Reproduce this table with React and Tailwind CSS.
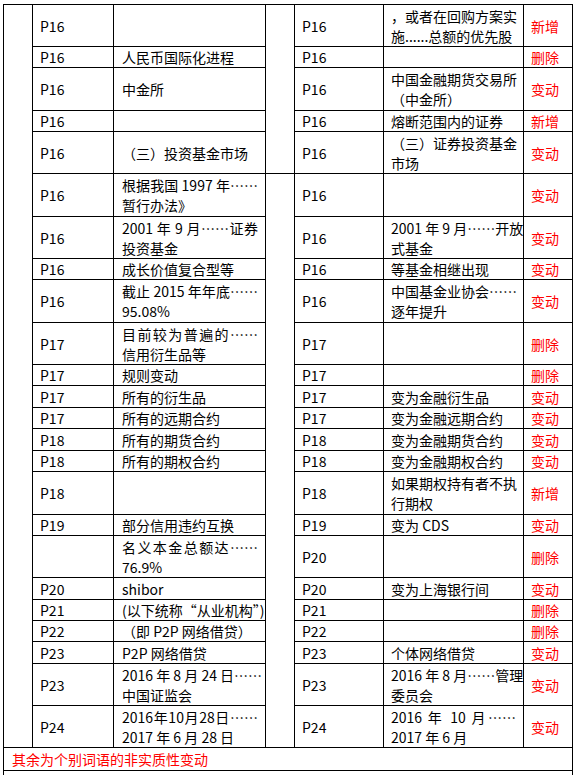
import React from "react";

const rows = [
  { h: "h-[42px]", lp: "P16", lt: [], rp: "P16", rt: ["，或者在回购方案实", "施......总额的优先股"], s: "新增" },
  { h: "h-[21px]", lp: "P16", lt: ["人民币国际化进程"], rp: "P16", rt: [], s: "删除" },
  { h: "h-[43px]", lp: "P16", lt: ["中金所"], rp: "P16", rt: ["中国金融期货交易所", "（中金所）"], s: "变动" },
  { h: "h-[21px]", lp: "P16", lt: [], rp: "P16", rt: ["熔断范围内的证券"], s: "新增" },
  { h: "h-[42px]", lp: "P16", lt: ["（三）投资基金市场"], rp: "P16", rt: ["（三）证券投资基金", "市场"], s: "变动", gap: true },
  { h: "h-[43px]", lp: "P16", lt: ["根据我国 1997 年……", "暂行办法》"], rp: "P16", rt: [], s: "变动" },
  { h: "h-[42px]", lp: "P16", lt: ["2001 年 9 月……证券", "投资基金"], rp: "P16", rt: ["2001 年 9 月……开放", "式基金"], s: "变动" },
  { h: "h-[21px]", lp: "P16", lt: ["成长价值复合型等"], rp: "P16", rt: ["等基金相继出现"], s: "变动" },
  { h: "h-[43px]", lp: "P16", lt: ["截止 2015 年年底……", "95.08%"], rp: "P16", rt: ["中国基金业协会……", "逐年提升"], s: "变动" },
  { h: "h-[42px]", lp: "P17", lt: ["目前较为普遍的……", "信用衍生品等"], rp: "P17", rt: [], s: "删除" },
  { h: "h-[21px]", lp: "P17", lt: ["规则变动"], rp: "P17", rt: [], s: "删除" },
  { h: "h-[22px]", lp: "P17", lt: ["所有的衍生品"], rp: "P17", rt: ["变为金融衍生品"], s: "变动" },
  { h: "h-[21px]", lp: "P17", lt: ["所有的远期合约"], rp: "P17", rt: ["变为金融远期合约"], s: "变动" },
  { h: "h-[22px]", lp: "P18", lt: ["所有的期货合约"], rp: "P18", rt: ["变为金融期货合约"], s: "变动" },
  { h: "h-[21px]", lp: "P18", lt: ["所有的期权合约"], rp: "P18", rt: ["变为金融期权合约"], s: "变动" },
  { h: "h-[43px]", lp: "P18", lt: [], rp: "P18", rt: ["如果期权持有者不执", "行期权"], s: "新增" },
  { h: "h-[21px]", lp: "P19", lt: ["部分信用违约互换"], rp: "P19", rt: ["变为 CDS"], s: "变动" },
  { h: "h-[42px]", lp: "", lt: ["名义本金总额达……", "76.9%"], rp: "P20", rt: [], s: "删除" },
  { h: "h-[22px]", lp: "P20", lt: ["shibor"], rp: "P20", rt: ["变为上海银行间"], s: "变动" },
  { h: "h-[21px]", lp: "P21", lt: ["(以下统称“从业机构”)"], rp: "P21", rt: [], s: "删除" },
  { h: "h-[21px]", lp: "P22", lt: ["（即 P2P 网络借贷）"], rp: "P22", rt: [], s: "删除" },
  { h: "h-[22px]", lp: "P23", lt: ["P2P 网络借贷"], rp: "P23", rt: ["个体网络借贷"], s: "变动" },
  { h: "h-[42px]", lp: "P23", lt: ["2016 年 8 月 24 日……", "中国证监会"], rp: "P23", rt: ["2016 年 8 月……管理", "委员会"], s: "变动" },
  { h: "h-[42px]", lp: "P24", lt: ["2016年10月28日……", "2017 年 6 月 28 日"], rp: "P24", rt: ["2016 年 10 月……", "2017 年 6 月"], s: "变动", gap: true, last: true },
];

function TextLines({ lines }) {
  if (lines.length === 0) return null;
  if (lines.length === 1) {
    return <div className="whitespace-nowrap">{lines[0]}</div>;
  }
  return (
    <div className="w-full">
      <div className="whitespace-nowrap [text-align-last:justify]">{lines[0]}</div>
      <div className="whitespace-nowrap">{lines[1]}</div>
    </div>
  );
}

export default function App() {
  return (
    <div className="min-h-[775px] bg-white font-['Noto_Sans_CJK_SC',sans-serif] text-[14px] leading-[20px] text-black">
      <div className="ml-[3px] pt-[4px]">
        <div className="w-[570px] border-l border-r border-t border-black">
          {rows.map((r, i) => (
            <div key={i} className={`flex ${r.h}`}>
              <div className={`w-[29px] shrink-0 border-r border-black ${r.last ? "border-b" : ""}`} />
              <div className="w-[81px] shrink-0 border-r border-b border-black flex items-center pl-[7px]">
                {r.lp}
              </div>
              <div className="w-[152px] shrink-0 border-r border-b border-black flex items-center pl-[8px] pr-[7px]">
                <TextLines lines={r.lt} />
              </div>
              <div className={`w-[29px] shrink-0 border-r border-black ${r.gap ? "border-b" : ""}`} />
              <div className="w-[89px] shrink-0 border-r border-b border-black flex items-center pl-[7px]">
                {r.rp}
              </div>
              <div className="w-[140px] shrink-0 border-r border-b border-black flex items-center pl-[7px] pr-[7px]">
                <TextLines lines={r.rt} />
              </div>
              <div className="w-[48px] shrink-0 border-b border-black flex items-center pl-[7px] text-[#ff0000]">
                {r.s}
              </div>
            </div>
          ))}
          <div className="h-[23px] border-b border-black flex items-center pl-[8px] text-[#ff0000]">
            其余为个别词语的非实质性变动
          </div>
          <div className="h-[20px]" />
        </div>
      </div>
    </div>
  );
}
